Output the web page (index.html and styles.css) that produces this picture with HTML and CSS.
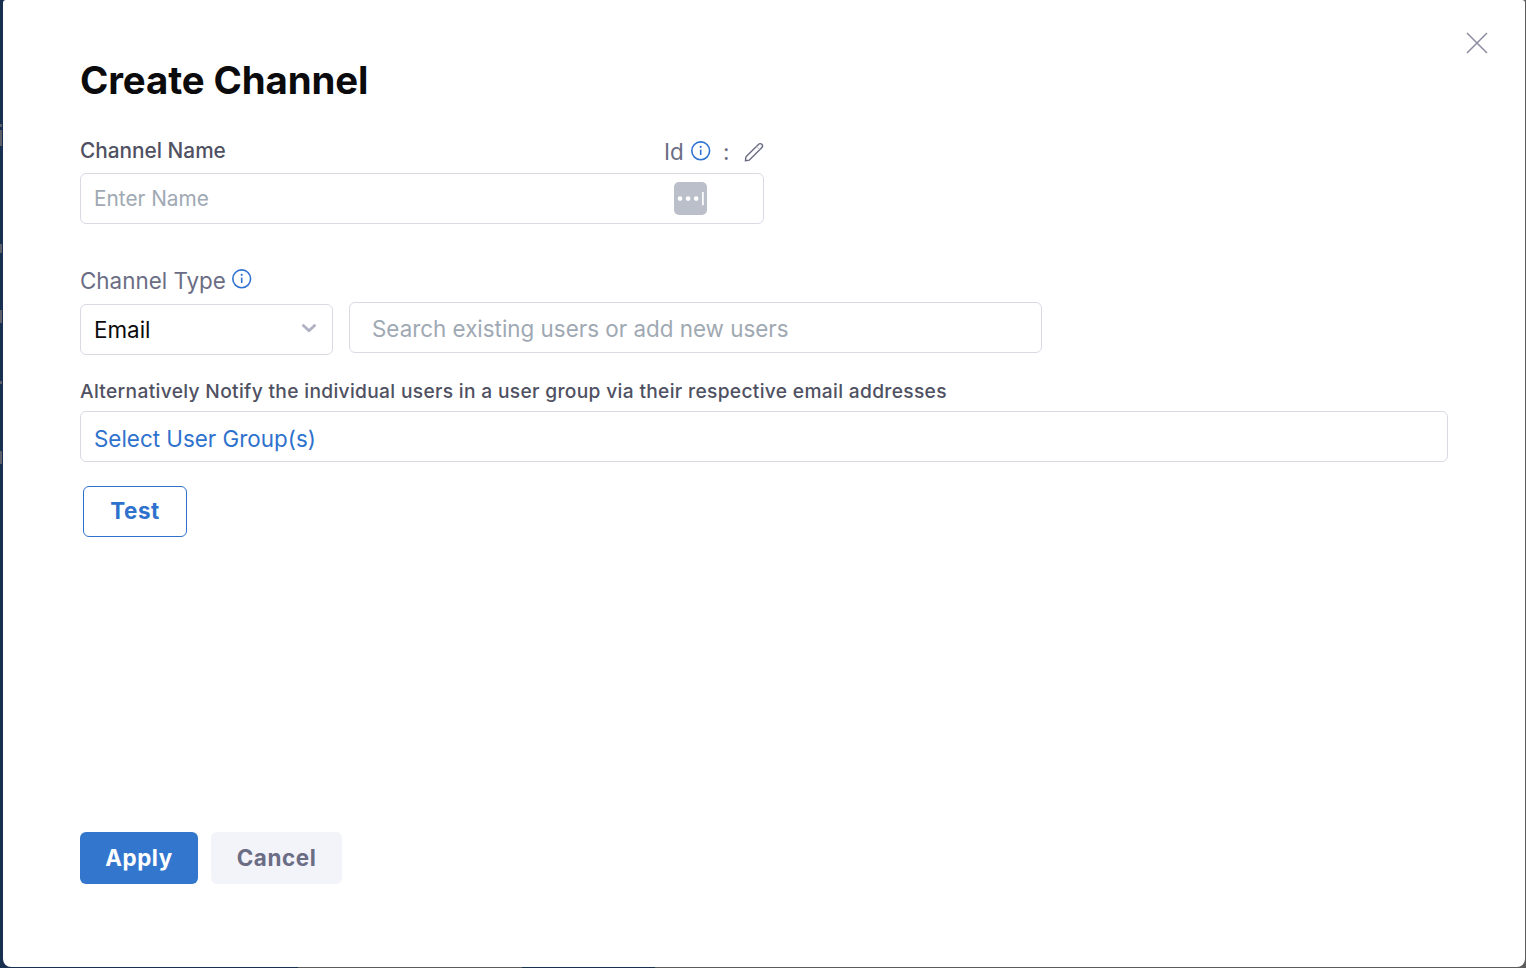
FILE: index.html
```html
<!DOCTYPE html>
<html lang="en">
<head>
<meta charset="utf-8">
<title>Create Channel</title>
<link rel="stylesheet" href="styles.css">
</head>
<body>
<div class="nav-peek" aria-hidden="true"><i class="p1"></i><i class="p2"></i><i class="p3"></i><i class="p4"></i><i class="p5"></i><i class="p6"></i></div>
<main class="dialog">
  <button class="close" aria-label="Close"><svg width="22" height="22" viewBox="0 0 22 22"><path d="M1 1 21 21M21 1 1 21"/></svg></button>
  <h1 class="title"><span>Create Channel</span></h1>
  <div class="name-head">
    <label class="name-label">Channel Name</label>
    <div class="id-row">
      <span class="id-text">Id</span>
      <svg class="info" width="20" height="20" viewBox="0 0 20 20"><circle cx="9.7" cy="9.8" r="8.9"/><path d="M9.7 8.6v5.4"/><circle class="dot" cx="9.7" cy="5.8" r="1.1"/></svg>
      <span class="colon">:</span>
      <svg class="pencil" width="20" height="20" viewBox="0 0 20 20"><path d="M1.4 18.8 2 14.7 14.4 2.4c1-1 2.5-1 3.4-.1s.9 2.4-.1 3.4L5.4 18.1Z"/><path class="thin" d="M12.8 4.6 15.4 7.2"/></svg>
    </div>
  </div>
  <div class="field name-field">
    <span class="hint-name">Enter Name</span>
    <svg class="filler" width="33" height="33" viewBox="0 0 33 33"><rect width="33" height="33" rx="5"/><circle cx="6" cy="16.6" r="2.3"/><circle cx="14.1" cy="16.6" r="2.3"/><circle cx="22.2" cy="16.6" r="2.3"/><path d="M28.9 10v13.2"/></svg>
  </div>
  <div class="type-head">
    <span class="type-label">Channel Type</span>
    <svg class="info" width="20" height="20" viewBox="0 0 20 20"><circle cx="9.7" cy="9.8" r="8.9"/><path d="M9.7 8.6v5.4"/><circle class="dot" cx="9.7" cy="5.8" r="1.1"/></svg>
  </div>
  <div class="type-row">
    <div class="field select"><span class="value">Email</span><svg class="chevron" width="16" height="10" viewBox="0 0 16 10"><path d="M2.4 2.4 8 7.8 13.6 2.4"/></svg></div>
    <div class="field search"><span class="hint-search">Search existing users or add new users</span></div>
  </div>
  <p class="alt"><span>Alternatively Notify the individual users in a user group via their respective email addresses</span></p>
  <div class="field groups"><span class="link">Select User Group(s)</span></div>
  <button class="btn test">Test</button>
  <footer class="actions">
    <button class="btn apply">Apply</button>
    <button class="btn cancel">Cancel</button>
  </footer>
</main>
</body>
</html>
```
FILE: styles.css
```css
* { box-sizing: border-box; }
body {
  margin: 0;
  height: 968px;
  overflow: hidden;
  position: relative;
  padding: 0 1px 1px 3px;
  font-family: Inter, "Liberation Sans", sans-serif;
  background:
    linear-gradient(90deg, #17304f 298px, #5c5c5c 298px, #5c5c5c 522px, #17304f 522px, #17304f 655px, #5c5c5c 655px);
}
.nav-peek i { position: absolute; left: 0; width: 2px; background: #5d6068; }
.nav-peek .p1 { top: 124px; height: 3px; }
.nav-peek .p2 { top: 130px; height: 16px; }
.nav-peek .p3 { top: 244px; height: 9px; }
.nav-peek .p4 { top: 310px; height: 13px; }
.nav-peek .p5 { top: 381px; height: 3px; }
.nav-peek .p6 { top: 451px; height: 13px; }
.dialog {
  position: relative;
  display: flex;
  flex-direction: column;
  align-items: flex-start;
  height: 967px;
  padding: 56px 77px 0;
  background: #fff;
  border-radius: 3px 3px 8px 8px;
}
.close {
  position: absolute;
  top: 32px;
  right: 37px;
  width: 22px;
  height: 22px;
  padding: 0;
  border: 0;
  background: none;
}
.close svg { display: block; fill: none; stroke: #8b8ba0; stroke-width: 1.5; }
.title {
  margin: 0 0 34px;
  font-size: 38.4px;
  line-height: 48px;
  font-weight: 650;
  letter-spacing: -.12px;
  color: #0b0b0d;
}
.name-head { display: flex; justify-content: space-between; width: 684px; height: 35px; }
.name-label {
  font-size: 20.8px;
  line-height: 26px;
  font-weight: 500;
  color: #4f5162;
}
.id-row { display: flex; width: 100px; color: #6b6d85; font-size: 22.4px; line-height: 28px; }
.id-text { width: 27px; }
.colon { width: 21px; margin-left: 12px; }
.info { flex: none; margin-top: 3px; fill: none; stroke: #2f72d2; stroke-width: 1.6; }
.info .dot { fill: #2f72d2; stroke: none; }
.pencil { flex: none; margin-top: 4px; fill: none; stroke: #6b6d85; stroke-width: 1.4; stroke-linejoin: round; }
.pencil .thin { stroke: #c4c5d0; stroke-width: 1; }
.field {
  display: flex;
  align-items: center;
  height: 51px;
  padding: 0 13px;
  border: 1px solid #d9dae5;
  border-radius: 6px;
  font-size: 22.4px;
  line-height: 28px;
}
.name-field { width: 684px; justify-content: space-between; padding-right: 56px; }
.hint-name { font-size: 20.8px; color: #9fa9b3; }
.filler { fill: #fff; stroke: none; }
.filler rect { fill: #babfc9; }
.filler path { stroke: #fff; stroke-width: 1.7; }
.type-head { display: flex; margin-top: 43px; height: 35px; }
.type-label { width: 152px; font-size: 22.4px; line-height: 28px; color: #6b6d85; white-space: nowrap; }
.type-head .info { margin-top: 2px; }
.type-row { display: flex; gap: 16px; height: 53px; align-items: flex-end; }
.select { width: 253px; justify-content: space-between; padding-right: 15px; }
.value { color: #0b0b0d; }
.chevron { margin-top: -3px; fill: none; stroke: #b0b1c4; stroke-width: 2.8; stroke-linecap: round; stroke-linejoin: round; }
.search { width: 693px; align-self: flex-start; padding-left: 22px; }
.hint-search { color: #9fa9b3; padding-top: 2px; }
.alt {
  margin: 24px 0 8px;
  font-size: 19.2px;
  line-height: 24px;
  font-weight: 500;
  letter-spacing: .32px;
  color: #4f5162;
}
.groups { width: 1368px; }
.link { color: #2f72cd; padding-top: 4px; }
.btn { height: 52px; padding: 0; border: 0; border-radius: 6px; font: 650 22.4px/28px Inter, sans-serif; letter-spacing: .6px; }
.test { width: 104px; height: 51px; margin: 24px 0 0 3px; padding-bottom: 2px; border: 1px solid #2f72cd; background: #fff; color: #2f72cd; }
.actions { display: flex; gap: 13px; margin-top: 295px; }
.apply { width: 118px; background: #3376ce; color: #fff; }
.cancel { width: 131px; background: #f3f3fa; color: #6b6d85; }
```
